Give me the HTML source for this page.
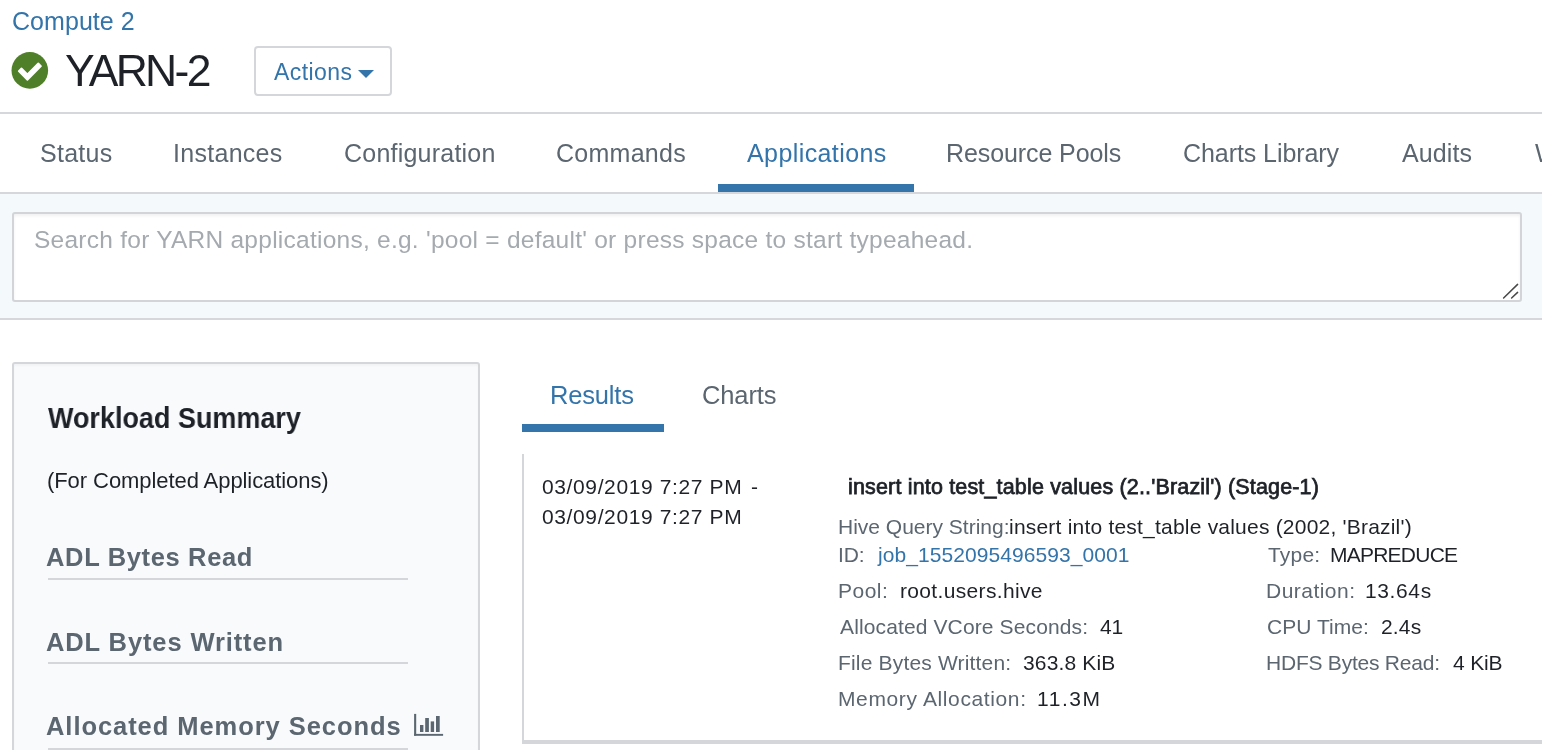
<!DOCTYPE html>
<html><head><meta charset="utf-8"><style>
html,body{margin:0;padding:0;}
body{width:1542px;height:750px;overflow:hidden;background:#fff;position:relative;font-family:"Liberation Sans",sans-serif;}
.t{position:absolute;white-space:pre;font-family:"Liberation Sans",sans-serif;will-change:transform;}
.b{position:absolute;}
</style></head><body>
<!-- header -->
<svg class="b" style="left:0;top:40px" width="60" height="60" viewBox="0 40 60 60">
<circle cx="29.8" cy="70.4" r="18.3" fill="#4f7f28"/>
<path d="M21.48 68.45 L27.4 74.36 L38.27 63.5 L40.95 66.18 L27.4 79.74 L18.8 71.13 Z" fill="#fff" stroke="#fff" stroke-width="1.8" stroke-linejoin="round"/>
</svg>
<div class="b" style="left:254px;top:46px;width:134px;height:46px;border:2px solid #d4d6da;border-radius:4px;"></div>
<svg class="b" style="left:358px;top:70px" width="16" height="8"><path d="M0 0 L16 0 L8 8 Z" fill="#3374aa"/></svg>
<div class="b" style="left:0;top:112px;width:1542px;height:2px;background:#d5d7db"></div>
<div class="b" style="left:718px;top:184px;width:196px;height:8px;background:#3475ab"></div>
<div class="b" style="left:0;top:192px;width:1542px;height:2px;background:#d5d7db"></div>
<div class="b" style="left:0;top:194px;width:1542px;height:124px;background:#f4f9fc"></div>
<div class="b" style="left:0;top:318px;width:1542px;height:2px;background:#d5d7db"></div>
<div class="b" style="left:12px;top:212px;width:1506px;height:86px;border:2px solid #d2d4d8;border-radius:3px;background:#fff;box-shadow:inset 0 2px 3px rgba(0,0,0,.06)"></div>
<svg class="b" style="left:1500px;top:282px" width="20" height="18"><path d="M3.6 16 L17.6 2.4 M11.6 16 L17.6 10.4" stroke="#484848" stroke-width="1.5" stroke-linecap="round" fill="none"/></svg>
<!-- panel -->
<div class="b" style="left:12px;top:362px;width:464px;height:400px;border:2px solid #d4d6da;border-radius:3px;background:#f9fafc;box-shadow:inset 0 2px 2px rgba(0,0,0,.03)"></div>
<div class="b" style="left:48px;top:578px;width:360px;height:2px;background:#d4d6da"></div>
<div class="b" style="left:48px;top:662px;width:360px;height:2px;background:#d4d6da"></div>
<div class="b" style="left:48px;top:748px;width:360px;height:2px;background:#d4d6da"></div>
<svg class="b" style="left:408px;top:706px" width="40" height="34"><g fill="#5b6670"><rect x="6.1" y="7.9" width="2.1" height="21.8"/><rect x="6.1" y="27.9" width="29" height="1.9"/><rect x="12" y="19" width="3.4" height="7"/><rect x="17.2" y="12" width="3.7" height="14"/><rect x="22.7" y="15.4" width="3.4" height="10.6"/><rect x="28" y="10" width="3.7" height="16"/></g></svg>
<!-- results -->
<div class="b" style="left:522px;top:424px;width:142px;height:8px;background:#3475ab"></div>
<div class="b" style="left:522px;top:454px;width:2px;height:290px;background:#d4d6da"></div>
<div class="b" style="left:522px;top:740px;width:1020px;height:4px;background:#d4d6da"></div>
<span class="t" style="left:11.60px;top:8.70px;font-size:25px;line-height:25px;color:#3374aa;letter-spacing:0.050px;">Compute 2</span>
<span class="t" style="left:64.60px;top:48.70px;font-size:44.5px;line-height:44.5px;color:#1e2228;letter-spacing:-2.700px;">YARN-2</span>
<span class="t" style="left:274.00px;top:60.70px;font-size:23px;line-height:23px;color:#3374aa;letter-spacing:0.417px;">Actions</span>
<span class="t" style="left:39.60px;top:141.00px;font-size:25px;line-height:25px;color:#5b6670;letter-spacing:0.280px;">Status</span>
<span class="t" style="left:172.70px;top:141.00px;font-size:25px;line-height:25px;color:#5b6670;letter-spacing:0.288px;">Instances</span>
<span class="t" style="left:343.60px;top:141.00px;font-size:25px;line-height:25px;color:#5b6670;letter-spacing:0.225px;">Configuration</span>
<span class="t" style="left:555.60px;top:141.00px;font-size:25px;line-height:25px;color:#5b6670;letter-spacing:0.271px;">Commands</span>
<span class="t" style="left:747.00px;top:141.00px;font-size:25px;line-height:25px;color:#3374aa;letter-spacing:0.409px;">Applications</span>
<span class="t" style="left:946.00px;top:141.00px;font-size:25px;line-height:25px;color:#5b6670;letter-spacing:-0.092px;">Resource Pools</span>
<span class="t" style="left:1183.30px;top:141.00px;font-size:25px;line-height:25px;color:#5b6670;letter-spacing:-0.069px;">Charts Library</span>
<span class="t" style="left:1402.00px;top:141.00px;font-size:25px;line-height:25px;color:#5b6670;letter-spacing:0.120px;">Audits</span>
<span class="t" style="left:1535.00px;top:141.00px;font-size:25px;line-height:25px;color:#5b6670;">W</span>
<span class="t" style="left:33.50px;top:227.50px;font-size:24.5px;line-height:24.5px;color:#a4aaaf;letter-spacing:0.253px;">Search for YARN applications, e.g. 'pool = default' or press space to start typeahead.</span>
<span class="t" style="left:48.10px;top:403.40px;font-size:30px;line-height:30px;color:#1e2228;font-weight:700;transform:scaleX(0.8993);transform-origin:0 0;">Workload Summary</span>
<span class="t" style="left:47.00px;top:470.00px;font-size:22px;line-height:22px;color:#1e2228;letter-spacing:-0.074px;">(For Completed Applications)</span>
<span class="t" style="left:46.30px;top:545.40px;font-size:25.5px;line-height:25.5px;color:#5b6670;font-weight:700;letter-spacing:0.654px;">ADL Bytes Read</span>
<span class="t" style="left:46.30px;top:629.50px;font-size:25.5px;line-height:25.5px;color:#5b6670;font-weight:700;letter-spacing:0.887px;">ADL Bytes Written</span>
<span class="t" style="left:46.30px;top:713.70px;font-size:25.5px;line-height:25.5px;color:#5b6670;font-weight:700;letter-spacing:0.943px;">Allocated Memory Seconds</span>
<span class="t" style="left:550.30px;top:383.40px;font-size:25.5px;line-height:25.5px;color:#3374aa;letter-spacing:-0.183px;">Results</span>
<span class="t" style="left:701.80px;top:383.40px;font-size:25.5px;line-height:25.5px;color:#5b6670;letter-spacing:-0.120px;">Charts</span>
<span class="t" style="left:541.80px;top:475.80px;font-size:21px;line-height:21px;color:#1e2228;letter-spacing:0.618px;">03/09/2019 7:27 PM</span>
<span class="t" style="left:751.00px;top:475.80px;font-size:21px;line-height:21px;color:#1e2228;">-</span>
<span class="t" style="left:541.80px;top:505.70px;font-size:21px;line-height:21px;color:#1e2228;letter-spacing:0.618px;">03/09/2019 7:27 PM</span>
<span class="t" style="left:848.00px;top:476.70px;font-size:21.5px;line-height:21.5px;color:#1e2228;letter-spacing:0.165px;-webkit-text-stroke:0.75px #1e2228;">insert into test_table values (2..'Brazil') (Stage-1)</span>
<span class="t" style="left:838.40px;top:515.50px;font-size:21px;line-height:21px;color:#5b6670;">Hive Query String:</span>
<span class="t" style="left:1008.50px;top:515.50px;font-size:21px;line-height:21px;color:#1e2228;letter-spacing:0.211px;">insert into test_table values (2002, 'Brazil')</span>
<span class="t" style="left:838.40px;top:543.60px;font-size:21px;line-height:21px;color:#5b6670;letter-spacing:-0.100px;">ID:</span>
<span class="t" style="left:878.30px;top:543.60px;font-size:21px;line-height:21px;color:#3374aa;letter-spacing:0.071px;">job_1552095496593_0001</span>
<span class="t" style="left:838.40px;top:580.00px;font-size:21px;line-height:21px;color:#5b6670;letter-spacing:0.500px;">Pool:</span>
<span class="t" style="left:900.00px;top:580.00px;font-size:21px;line-height:21px;color:#1e2228;letter-spacing:0.336px;">root.users.hive</span>
<span class="t" style="left:840.40px;top:615.50px;font-size:21px;line-height:21px;color:#5b6670;letter-spacing:0.126px;">Allocated VCore Seconds:</span>
<span class="t" style="left:1099.80px;top:615.50px;font-size:21px;line-height:21px;color:#1e2228;letter-spacing:-0.300px;">41</span>
<span class="t" style="left:838.40px;top:651.80px;font-size:21px;line-height:21px;color:#5b6670;letter-spacing:0.172px;">File Bytes Written:</span>
<span class="t" style="left:1023.00px;top:651.80px;font-size:21px;line-height:21px;color:#1e2228;letter-spacing:0.162px;">363.8 KiB</span>
<span class="t" style="left:838.40px;top:688.00px;font-size:21px;line-height:21px;color:#5b6670;letter-spacing:0.624px;">Memory Allocation:</span>
<span class="t" style="left:1036.50px;top:688.00px;font-size:21px;line-height:21px;color:#1e2228;letter-spacing:1.550px;">11.3M</span>
<span class="t" style="left:1268.20px;top:543.70px;font-size:21px;line-height:21px;color:#5b6670;letter-spacing:0.200px;">Type:</span>
<span class="t" style="left:1330.00px;top:543.70px;font-size:21px;line-height:21px;color:#1e2228;letter-spacing:-0.762px;">MAPREDUCE</span>
<span class="t" style="left:1266.20px;top:579.70px;font-size:21px;line-height:21px;color:#5b6670;letter-spacing:0.475px;">Duration:</span>
<span class="t" style="left:1365.40px;top:579.70px;font-size:21px;line-height:21px;color:#1e2228;letter-spacing:0.620px;">13.64s</span>
<span class="t" style="left:1267.20px;top:616.00px;font-size:21px;line-height:21px;color:#5b6670;letter-spacing:0.025px;">CPU Time:</span>
<span class="t" style="left:1380.50px;top:616.00px;font-size:21px;line-height:21px;color:#1e2228;letter-spacing:0.167px;">2.4s</span>
<span class="t" style="left:1266.20px;top:652.00px;font-size:21px;line-height:21px;color:#5b6670;letter-spacing:-0.227px;">HDFS Bytes Read:</span>
<span class="t" style="left:1452.50px;top:652.00px;font-size:21px;line-height:21px;color:#1e2228;letter-spacing:-0.150px;">4 KiB</span>
</body></html>
